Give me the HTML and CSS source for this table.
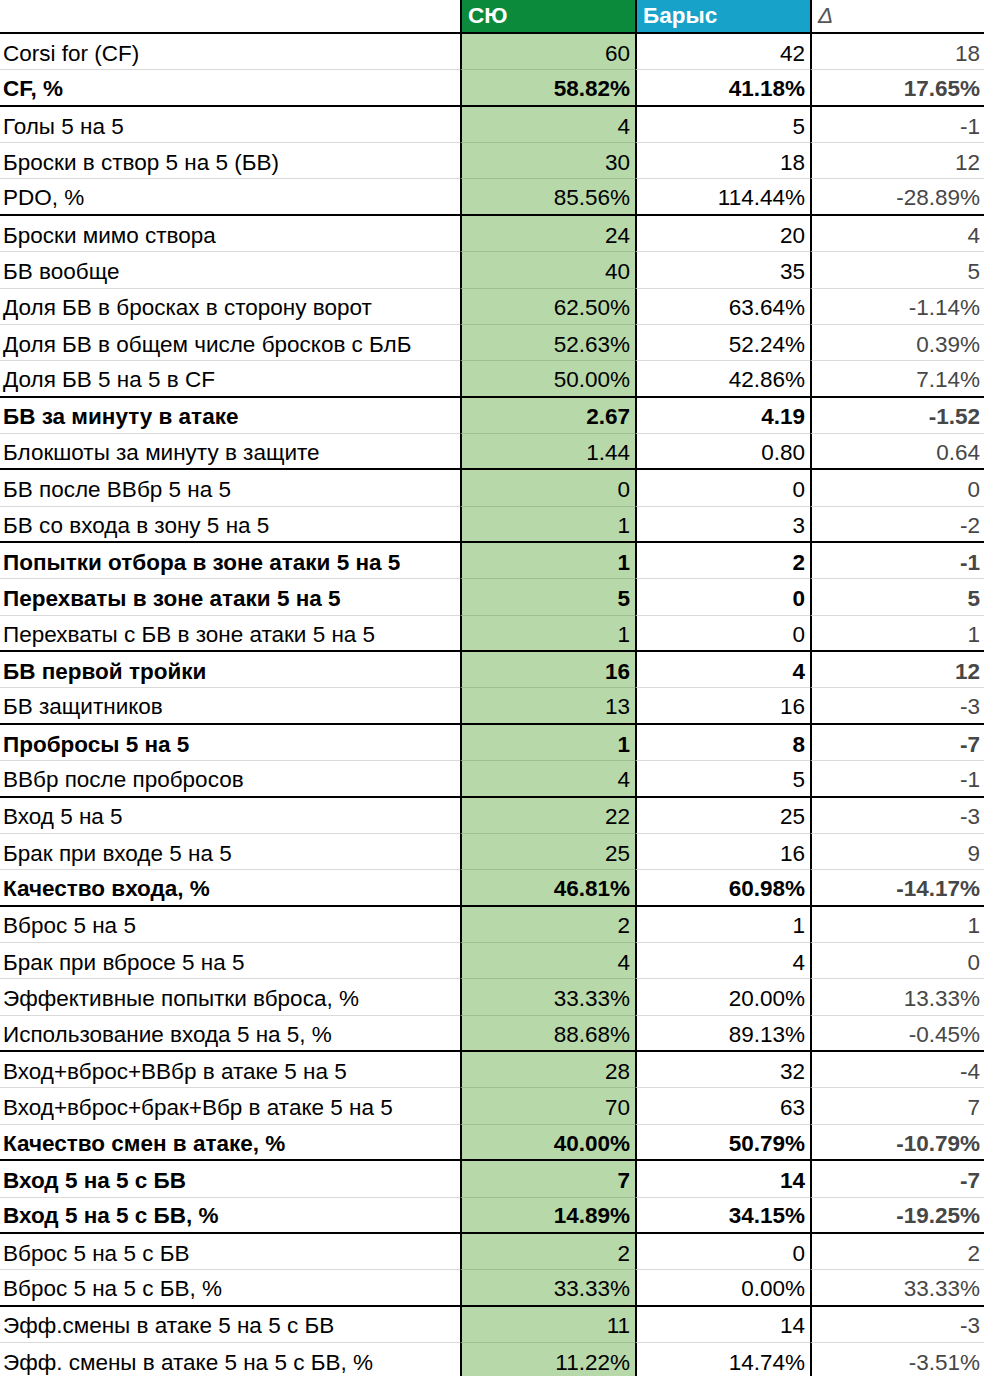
FILE: index.html
```html
<!DOCTYPE html>
<html lang="ru">
<head>
<meta charset="utf-8">
<title>СЮ — Барыс</title>
<link rel="stylesheet" href="styles.css">
</head>
<body>
<div class="sheet">
  <div class="row head">
    <div class="c lab"></div>
    <div class="c hg">СЮ</div>
    <div class="c hb">Барыс</div>
    <div class="c hd">Δ</div>
  </div>
  <div class="row"><div class="c lab">Corsi for (CF)</div><div class="c g">60</div><div class="c">42</div><div class="c d">18</div></div>
  <div class="row b t"><div class="c lab">CF, %</div><div class="c g">58.82%</div><div class="c">41.18%</div><div class="c d">17.65%</div></div>
  <div class="row"><div class="c lab">Голы 5 на 5</div><div class="c g">4</div><div class="c">5</div><div class="c d">-1</div></div>
  <div class="row"><div class="c lab">Броски в створ 5 на 5 (БВ)</div><div class="c g">30</div><div class="c">18</div><div class="c d">12</div></div>
  <div class="row t"><div class="c lab">PDO, %</div><div class="c g">85.56%</div><div class="c">114.44%</div><div class="c d">-28.89%</div></div>
  <div class="row"><div class="c lab">Броски мимо створа</div><div class="c g">24</div><div class="c">20</div><div class="c d">4</div></div>
  <div class="row"><div class="c lab">БВ вообще</div><div class="c g">40</div><div class="c">35</div><div class="c d">5</div></div>
  <div class="row"><div class="c lab">Доля БВ в бросках в сторону ворот</div><div class="c g">62.50%</div><div class="c">63.64%</div><div class="c d">-1.14%</div></div>
  <div class="row"><div class="c lab">Доля БВ в общем числе бросков с БлБ</div><div class="c g">52.63%</div><div class="c">52.24%</div><div class="c d">0.39%</div></div>
  <div class="row t"><div class="c lab">Доля БВ 5 на 5 в CF</div><div class="c g">50.00%</div><div class="c">42.86%</div><div class="c d">7.14%</div></div>
  <div class="row b"><div class="c lab">БВ за минуту в атаке</div><div class="c g">2.67</div><div class="c">4.19</div><div class="c d">-1.52</div></div>
  <div class="row t"><div class="c lab">Блокшоты за минуту в защите</div><div class="c g">1.44</div><div class="c">0.80</div><div class="c d">0.64</div></div>
  <div class="row"><div class="c lab">БВ после ВВбр 5 на 5</div><div class="c g">0</div><div class="c">0</div><div class="c d">0</div></div>
  <div class="row t"><div class="c lab">БВ со входа в зону 5 на 5</div><div class="c g">1</div><div class="c">3</div><div class="c d">-2</div></div>
  <div class="row b"><div class="c lab">Попытки отбора в зоне атаки 5 на 5</div><div class="c g">1</div><div class="c">2</div><div class="c d">-1</div></div>
  <div class="row b"><div class="c lab">Перехваты в зоне атаки 5 на 5</div><div class="c g">5</div><div class="c">0</div><div class="c d">5</div></div>
  <div class="row t"><div class="c lab">Перехваты с БВ в зоне атаки 5 на 5</div><div class="c g">1</div><div class="c">0</div><div class="c d">1</div></div>
  <div class="row b"><div class="c lab">БВ первой тройки</div><div class="c g">16</div><div class="c">4</div><div class="c d">12</div></div>
  <div class="row t"><div class="c lab">БВ защитников</div><div class="c g">13</div><div class="c">16</div><div class="c d">-3</div></div>
  <div class="row b"><div class="c lab">Пробросы 5 на 5</div><div class="c g">1</div><div class="c">8</div><div class="c d">-7</div></div>
  <div class="row t"><div class="c lab">ВВбр после пробросов</div><div class="c g">4</div><div class="c">5</div><div class="c d">-1</div></div>
  <div class="row"><div class="c lab">Вход 5 на 5</div><div class="c g">22</div><div class="c">25</div><div class="c d">-3</div></div>
  <div class="row"><div class="c lab">Брак при входе 5 на 5</div><div class="c g">25</div><div class="c">16</div><div class="c d">9</div></div>
  <div class="row b t"><div class="c lab">Качество входа, %</div><div class="c g">46.81%</div><div class="c">60.98%</div><div class="c d">-14.17%</div></div>
  <div class="row"><div class="c lab">Вброс 5 на 5</div><div class="c g">2</div><div class="c">1</div><div class="c d">1</div></div>
  <div class="row"><div class="c lab">Брак при вбросе 5 на 5</div><div class="c g">4</div><div class="c">4</div><div class="c d">0</div></div>
  <div class="row"><div class="c lab">Эффективные попытки вброса, %</div><div class="c g">33.33%</div><div class="c">20.00%</div><div class="c d">13.33%</div></div>
  <div class="row t"><div class="c lab">Использование входа 5 на 5, %</div><div class="c g">88.68%</div><div class="c">89.13%</div><div class="c d">-0.45%</div></div>
  <div class="row"><div class="c lab">Вход+вброс+ВВбр в атаке 5 на 5</div><div class="c g">28</div><div class="c">32</div><div class="c d">-4</div></div>
  <div class="row"><div class="c lab">Вход+вброс+брак+Вбр в атаке 5 на 5</div><div class="c g">70</div><div class="c">63</div><div class="c d">7</div></div>
  <div class="row b t"><div class="c lab">Качество смен в атаке, %</div><div class="c g">40.00%</div><div class="c">50.79%</div><div class="c d">-10.79%</div></div>
  <div class="row b"><div class="c lab">Вход 5 на 5 с БВ</div><div class="c g">7</div><div class="c">14</div><div class="c d">-7</div></div>
  <div class="row b t"><div class="c lab">Вход 5 на 5 с БВ, %</div><div class="c g">14.89%</div><div class="c">34.15%</div><div class="c d">-19.25%</div></div>
  <div class="row"><div class="c lab">Вброс 5 на 5 с БВ</div><div class="c g">2</div><div class="c">0</div><div class="c d">2</div></div>
  <div class="row t"><div class="c lab">Вброс 5 на 5 с БВ, %</div><div class="c g">33.33%</div><div class="c">0.00%</div><div class="c d">33.33%</div></div>
  <div class="row"><div class="c lab">Эфф.смены в атаке 5 на 5 с БВ</div><div class="c g">11</div><div class="c">14</div><div class="c d">-3</div></div>
  <div class="row"><div class="c lab">Эфф. смены в атаке 5 на 5 с БВ, %</div><div class="c g">11.22%</div><div class="c">14.74%</div><div class="c d">-3.51%</div></div>
</div>
</body>
</html>
```
FILE: styles.css
```css
html, body {
  margin: 0;
  padding: 0;
  background: #fff;
}
body {
  font-family: "Liberation Sans", Arial, sans-serif;
  font-size: 22.5px;
  color: #000;
  overflow: hidden;
}
.sheet {
  width: 984px;
}
.row {
  display: grid;
  grid-template-columns: 460px 175px 175px 174px;
  height: 36.37px;
}
.row.head {
  height: 34px;
}
.c {
  box-sizing: border-box;
  display: flex;
  align-items: flex-end;
  justify-content: flex-end;
  padding: 0 5px 4px 0;
  line-height: 1;
  white-space: nowrap;
  border-bottom: 1px solid #dadada;
  border-left: 2px solid #000;
  overflow: hidden;
}
.c.lab {
  justify-content: flex-start;
  padding-left: 3px;
  border-left: none;
}
.c.g {
  background: #b7d8a8;
  border-bottom-color: #9fbf91;
}
.c.d {
  color: #474747;
  padding-right: 4px;
}
.row.b .c {
  font-weight: bold;
}
.row.t .c {
  border-bottom: 2px solid #000;
}
.row.head .c {
  border-bottom: 2px solid #000;
  justify-content: flex-start;
  font-weight: bold;
  color: #fff;
  padding: 0 0 5px 6px;
}
.row.head .c.lab {
  border-left: none;
}
.c.hg {
  background: #0b8a3b;
}
.c.hb {
  background: #17a2c9;
}
.row.head .c.hd {
  background: #fff;
  color: #555;
  font-weight: normal;
  font-style: italic;
}
```
